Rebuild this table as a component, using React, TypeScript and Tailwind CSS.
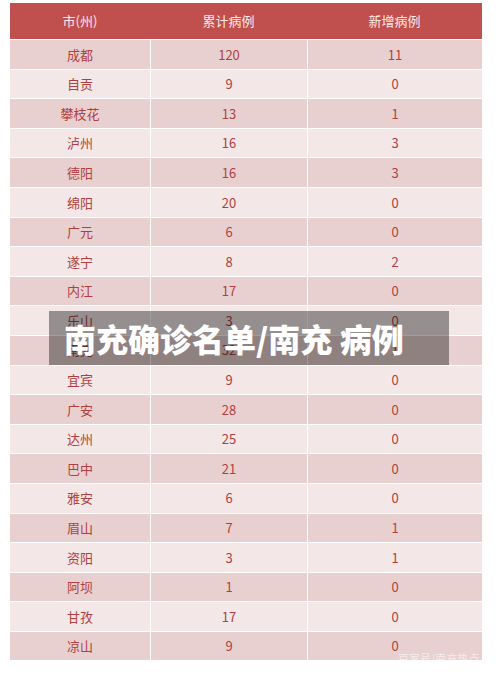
const rows: [string, number, number][] = [
  ["成都", 120, 11],
  ["自贡", 9, 0],
  ["攀枝花", 13, 1],
  ["泸州", 16, 3],
  ["德阳", 16, 3],
  ["绵阳", 20, 0],
  ["广元", 6, 0],
  ["遂宁", 8, 2],
  ["内江", 17, 0],
  ["乐山", 3, 0],
  ["南充", 32, 1],
  ["宜宾", 9, 0],
  ["广安", 28, 0],
  ["达州", 25, 0],
  ["巴中", 21, 0],
  ["雅安", 6, 0],
  ["眉山", 7, 1],
  ["资阳", 3, 1],
  ["阿坝", 1, 0],
  ["甘孜", 17, 0],
  ["凉山", 9, 0],
];

const font = { fontFamily: '"Noto Sans CJK SC", "Noto Sans", sans-serif' };

export default function App() {
  return (
    <div className="relative w-[500px] h-[678px] bg-white overflow-hidden" style={font}>
      <div className="pt-[3px] pl-[10px]">
        <div className="w-[472px]">
          {/* header */}
          <div className="grid grid-cols-[140px_157px_175px] h-[36px] bg-[#c0504e] text-[#fbeaea] text-[13px]">
            <div className="flex items-center justify-center">市(州)</div>
            <div className="flex items-center justify-center">累计病例</div>
            <div className="flex items-center justify-center">新增病例</div>
          </div>
          {rows.map(([city, total, added], i) => (
            <div
              key={city}
              className={`grid grid-cols-[140px_157px_175px] h-[29.6px] text-[13px] text-[#b0403e] border-t border-white ${
                i % 2 === 0 ? "bg-[#e8d0d1]" : "bg-[#f3e7e7]"
              }`}
            >
              <div className="flex items-center justify-center">{city}</div>
              <div className="flex items-center justify-center border-l border-white">{total}</div>
              <div className="flex items-center justify-center border-l border-white">{added}</div>
            </div>
          ))}
        </div>
      </div>

      {/* watermark */}
      <div className="absolute left-[398px] top-[653px] text-[11px] text-white/60 leading-none">
        百家号/南充热点
      </div>

      {/* caption overlay */}
      <div className="absolute left-[49px] top-[311px] w-[400px] h-[54px] bg-black/[0.38] flex items-center pl-[15px]">
        <span className="text-white text-[32px] font-black leading-none">
          南充确诊名单/南充 病例
        </span>
      </div>
    </div>
  );
}
